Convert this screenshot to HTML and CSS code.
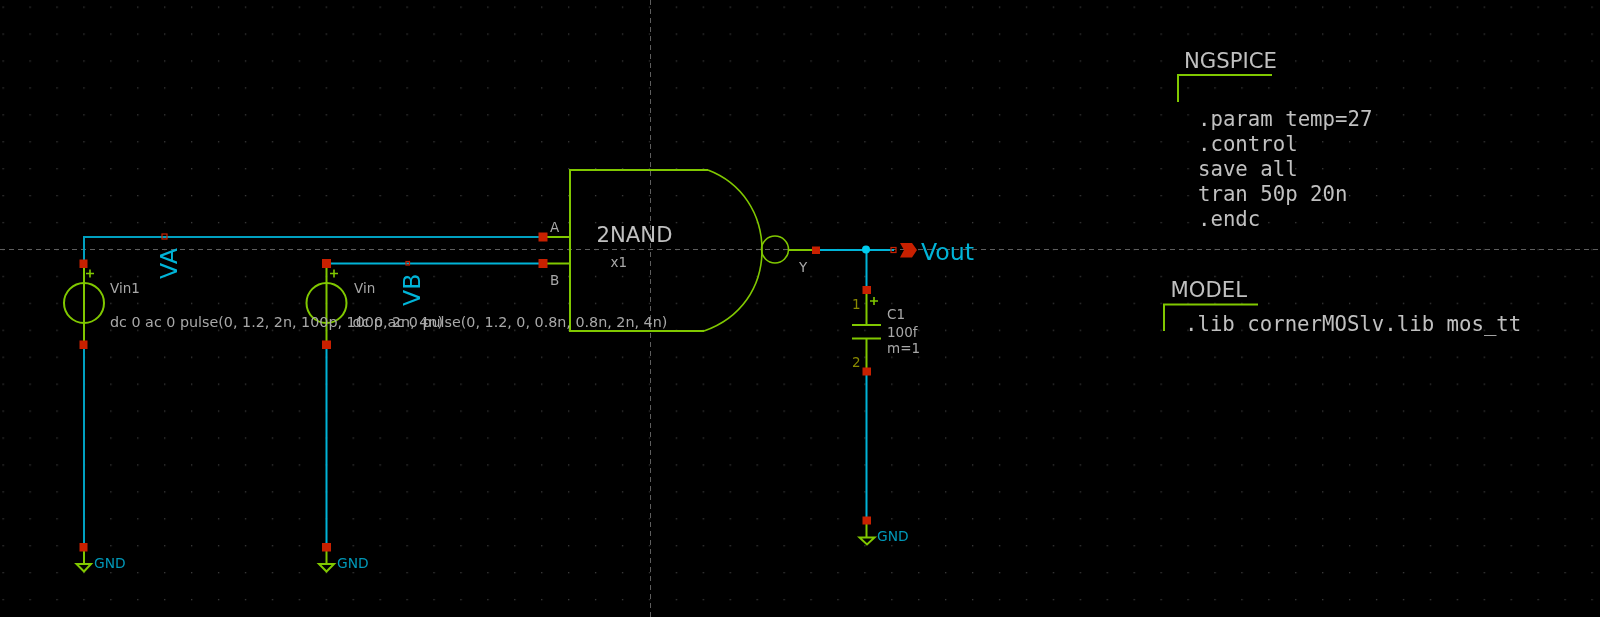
FILE: index.html

```html
<!DOCTYPE html>
<html lang="en">
<head>
  <meta charset="UTF-8">
  <title>2NAND testbench</title>
  <link rel="stylesheet" href="styles.css">
</head>
<body>
  <svg class="schematic" width="1600" height="617" viewBox="0 0 1600 617">
    <defs>
      <pattern id="grid" x="2.5" y="6.5" width="26.93" height="26.93" patternUnits="userSpaceOnUse">
        <rect class="dot" width="1.3" height="1.3"></rect>
      </pattern>
    </defs>
    <rect width="1600" height="617" fill="url(#grid)"></rect>

    <!-- crosshair -->
    <line class="axis" x1="0" y1="249.5" x2="1600" y2="249.5"></line>
    <line class="axis" x1="650.5" y1="0" x2="650.5" y2="617"></line>

    <!-- wires -->
    <path class="wire dim" d="M84 263V237H542"></path>
    <path class="wire dim" d="M84 345V547"></path>
    <path class="wire" d="M326.5 263.5H542"></path>
    <path class="wire" d="M326.5 345V547"></path>
    <path class="wire" d="M816 250H894"></path>
    <path class="wire" d="M866.5 250V290"></path>
    <path class="wire" d="M866.5 371V520"></path>
    <circle class="junction" cx="866" cy="249.5" r="4"></circle>

    <!-- source Vin1 -->
    <path class="sym" d="M84 263V345"></path>
    <circle class="sym" cx="84" cy="303" r="20"></circle>
    <path class="sym thin" d="M86 273.5H94M90 269.5V277.5"></path>

    <!-- source Vin -->
    <path class="sym" d="M326.5 263V345"></path>
    <circle class="sym" cx="326.5" cy="303" r="20"></circle>
    <path class="sym thin" d="M330 273.5H338M334 269.5V277.5"></path>

    <!-- NAND -->
    <path class="sym" d="M542 237H570M542 263.5H570"></path>
    <path class="sym" d="M708 170H570V331H704"></path>
    <path class="sym thin" d="M708 170C742 183 762 214 762 250C762 287 741 318 704 331"></path>
    <circle class="sym thin" cx="775" cy="249.5" r="13.5"></circle>
    <path class="sym" d="M788.5 250H816"></path>

    <!-- C1 -->
    <path class="sym" d="M866.5 290V324.5M866.5 338.5V371"></path>
    <path class="sym" d="M852 325H881M852 338.5H881"></path>
    <path class="sym thin" d="M870 301H878M874 297V305"></path>

    <!-- gnd -->
    <path class="sym" d="M84 547V563.5M76.5 564H91L84 571.5Z"></path>
    <path class="sym" d="M326.5 547V563.5M319 564H334L326.5 571.5Z"></path>
    <path class="sym" d="M866.5 520V537M859.5 537.5H874.5L867 544.5Z"></path>

    <!-- pins -->
    <rect class="pin" x="79.5" y="259.5" width="8" height="8.5"></rect>
    <rect class="pin" x="79.5" y="340.5" width="8" height="8.5"></rect>
    <rect class="pin" x="322" y="259" width="9" height="9"></rect>
    <rect class="pin" x="322" y="340.5" width="9" height="8.5"></rect>
    <rect class="pin" x="538.5" y="232.5" width="9" height="9"></rect>
    <rect class="pin" x="538.5" y="259" width="9" height="9"></rect>
    <rect class="pin" x="812" y="246.5" width="8" height="7.5"></rect>
    <rect class="pin" x="862.5" y="286" width="8.5" height="8"></rect>
    <rect class="pin" x="862.5" y="367.5" width="8.5" height="8"></rect>
    <rect class="pin" x="79.5" y="543" width="8" height="8.5"></rect>
    <rect class="pin" x="322" y="543" width="9" height="8.5"></rect>
    <rect class="pin" x="862.5" y="516.5" width="8.5" height="8"></rect>
    <rect class="mark" x="162" y="234" width="5" height="5"></rect>
    <rect class="mark" x="406" y="261.5" width="3.5" height="3.5"></rect>
    <rect class="mark" x="891" y="247.5" width="5" height="5"></rect>
    <path class="pin" d="M900 243H912L917 250L912 257.5H900L904 250Z"></path>

    <!-- labels -->
    <text class="label" x="110" y="292.5">Vin1</text>
    <text class="label pulse" x="110" y="326.5">dc 0 ac 0 pulse(0, 1.2, 2n, 100p, 100p, 2n, 4n)</text>
    <text class="label pulse" x="352.5" y="326.5">dc 0 ac 0 pulse(0, 1.2, 0, 0.8n, 0.8n, 2n, 4n)</text>
    <text class="label" x="354" y="292.5">Vin</text>
    <text class="label" x="550" y="231.5">A</text>
    <text class="label" x="550" y="285">B</text>
    <text class="label" x="610.5" y="267">x1</text>
    <text class="label" x="799" y="271.5">Y</text>
    <text class="label" x="887" y="319">C1</text>
    <text class="label" x="887" y="337">100f</text>
    <text class="label" x="887" y="353">m=1</text>
    <text class="label pin-no" x="852" y="309">1</text>
    <text class="label pin-no" x="852" y="367">2</text>
    <text class="title" x="596.5" y="241.5">2NAND</text>

    <text class="net gnd" x="94" y="568">GND</text>
    <text class="net gnd" x="337" y="568">GND</text>
    <text class="net gnd" x="877" y="541">GND</text>
    <text class="net big" x="921" y="260">Vout</text>
    <text class="net big" transform="translate(177 279) rotate(-90)">VA</text>
    <text class="net big" transform="translate(420 306) rotate(-90)">VB</text>

    <!-- spice blocks -->
    <path class="sym" d="M1178 102V75H1272"></path>
    <text class="title" x="1184" y="67.5">NGSPICE</text>
    <text class="code" x="1198" y="126">.param temp=27</text>
    <text class="code" x="1198" y="151">.control</text>
    <text class="code" x="1198" y="176">save all</text>
    <text class="code" x="1198" y="201">tran 50p 20n</text>
    <text class="code" x="1198" y="226">.endc</text>

    <path class="sym" d="M1164 331V304.5H1258"></path>
    <text class="title" x="1170.5" y="297">MODEL</text>
    <text class="code" x="1185" y="331">.lib cornerMOSlv.lib mos_tt</text>
  </svg>
</body>
</html>
```

FILE: styles.css

```css
html, body {
  margin: 0;
  background: #000;
}
.schematic {
  display: block;
  background: #000;
  filter: blur(0.4px);
}
.dot {
  fill: #3c3c3c;
}
.axis {
  stroke: #5e5e5e;
  stroke-width: 1;
  stroke-dasharray: 5 4;
}
.wire {
  fill: none;
  stroke: #00b4d8;
  stroke-width: 2;
}
.wire.dim {
  stroke: #00a0c0;
}
.junction {
  fill: #00ccee;
}
.sym {
  fill: none;
  stroke: #80c800;
  stroke-width: 2;
}
.sym.thin {
  stroke-width: 1.6;
}
.pin {
  fill: #c82000;
}
.mark {
  fill: none;
  stroke: #c82000;
  stroke-width: 1.2;
}
.label {
  font-family: "DejaVu Sans", sans-serif;
  font-size: 13.5px;
  fill: #a8a8a8;
}
.label.pulse {
  font-size: 14.3px;
}
.label.pin-no {
  fill: #8a8a00;
}
.title {
  font-family: "DejaVu Sans", sans-serif;
  font-size: 21.2px;
  fill: #c0c0c0;
}
.net {
  font-family: "DejaVu Sans", sans-serif;
  fill: #00b4d8;
}
.net.big {
  font-size: 23.7px;
}
.net.gnd {
  font-size: 13.8px;
  fill: #0098b8;
}
.code {
  font-family: "DejaVu Sans Mono", monospace;
  font-size: 20.7px;
  fill: #c0c0c0;
}
```
